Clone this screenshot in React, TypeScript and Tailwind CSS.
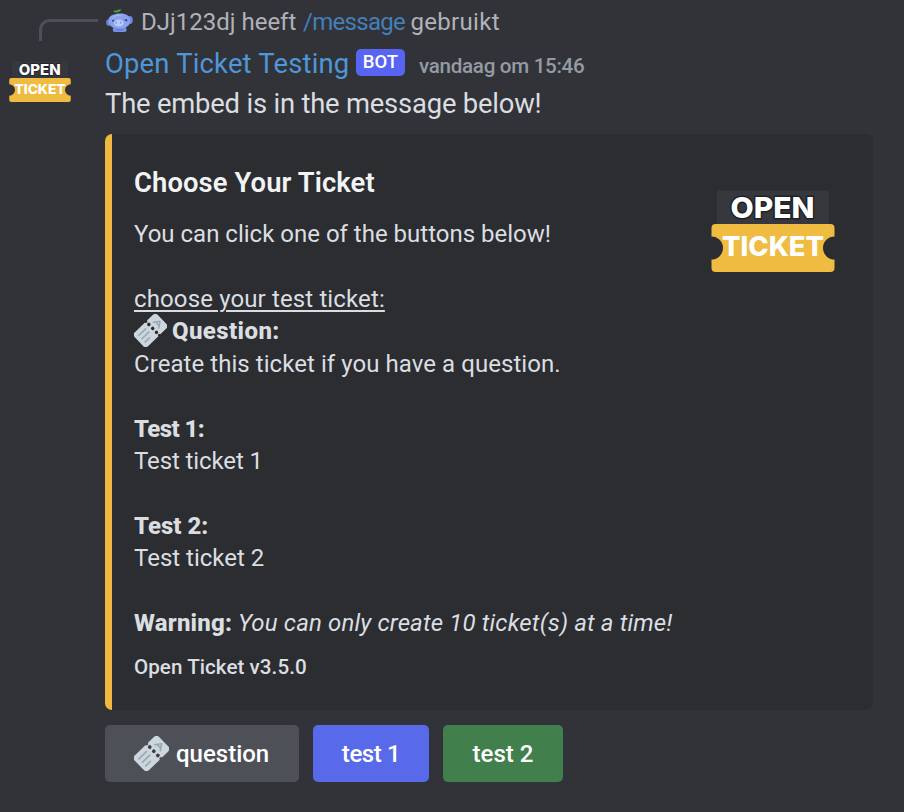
function Logo({ className }: { className: string }) {
  return (
    <svg viewBox="0 0 124 82" className={className}>
      <rect x="6" y="0.5" width="112" height="36" rx="2" fill="#36383e" />
      <path
        d="M4.500 34H119.500Q123.500 34 123.500 38V46.500A11.500 11.500 0 0 0 123.500 69.500V78Q123.500 82 119.500 82H4.500Q.5 82 .5 78V69.500A11.500 11.500 0 0 0 .5 46.500V38Q.5 34 4.500 34Z"
        fill="#efbb40"
      />
      <g fontFamily="Inter, 'Liberation Sans', sans-serif" fontWeight="800" fill="#fff">
        <text x="19.500" y="27.600" fontSize="29" textLength="84" lengthAdjust="spacingAndGlyphs" stroke="#1f2126" strokeWidth="3" paintOrder="stroke">
          OPEN
        </text>
        <text x="11" y="65.800" fontSize="27" textLength="102" lengthAdjust="spacingAndGlyphs">
          TICKET
        </text>
      </g>
    </svg>
  );
}

function TicketEmoji({ className, hole }: { className: string; hole: string }) {
  return (
    <svg viewBox="0 0 36 36" className={className}>
      <g transform="rotate(-44 18 18)">
        <path
          d="M4.500 7.500H19.800A1.500 1.500 0 0 0 22.800 7.500H31.500A4 4 0 0 1 35.500 11.500V24.500A4 4 0 0 1 31.500 28.500H22.800A1.500 1.500 0 0 0 19.800 28.500H4.500A4 4 0 0 1 .5 24.500V11.500A4 4 0 0 1 4.500 7.500Z"
          fill="#ccd6dd"
        />
        <g fill={hole}>
          <circle cx="21.300" cy="12" r="1.900" />
          <circle cx="21.300" cy="18" r="1.900" />
          <circle cx="21.300" cy="24" r="1.900" />
        </g>
        <path d="M5 13H15.500M5 18H15.500M5 23H11.500" stroke="#9aaab4" strokeWidth="1.800" strokeLinecap="round" />
        <path d="M26.500 22.300L32.500 18L26.500 13.700M28.500 15.500V20.500" fill="none" stroke="#9aaab4" strokeWidth="1.700" strokeLinecap="round" strokeLinejoin="round" />
      </g>
    </svg>
  );
}

function UserAvatar() {
  return (
    <svg viewBox="0 0 27 24" className="-mt-[2px] h-[24px] w-[27px] shrink-0">
      <path d="M7 2.800C8.500 .8 10 .8 10.500 1.800C12 .1 13.800 .3 15.300 .6C14 3.400 11.500 4 7 2.800Z" fill="#58a52c" />
      <ellipse cx="2.700" cy="13.500" rx="2.500" ry="3.300" fill="#6d82d6" />
      <ellipse cx="23.900" cy="11" rx="2.900" ry="4" fill="#7087dc" />
      <path d="M8 17H19.500L20.500 20.500Q21 23 18 23H9Q6.500 23 6.800 20.500Z" fill="#7790e4" />
      <path d="M2.500 11C3 6.500 8 4.700 14 4.600C20 4.500 24 7 24.300 11.500C24.500 17 19.500 19.500 13.500 19.600C7 19.700 2 17 2.500 11Z" fill="#88a2f0" />
      <path d="M6 9Q10 5.500 15.500 6.200" stroke="#a3b6f6" strokeWidth="1.300" fill="none" />
      <ellipse cx="12.800" cy="14" rx="5" ry="3.500" fill="#b9caf8" />
      <path d="M10 12.700V15M14.800 12.500V14.800" stroke="#7188d8" strokeWidth="1" />
      <circle cx="7.200" cy="11.800" r="1" fill="#34406f" />
      <path d="M18.500 11.500L20.200 10.500L21 12.300" stroke="#34406f" strokeWidth="1.200" fill="none" />
      <path d="M10 20.800H17" stroke="#5e72c8" strokeWidth="1" />
    </svg>
  );
}

export default function App() {
  return (
    <div className="flex h-[812px] w-[904px] overflow-hidden bg-[#313338] font-[Roboto,'Noto_Sans',sans-serif] whitespace-nowrap text-[#dbdee1]">
      <div className="w-[105px] shrink-0">
        <div className="mt-[19px] ml-[39px] h-[22px] w-[59px] rounded-tl-[11px] border-t-[3px] border-l-[3px] border-[#4e5058]" />
        <Logo className="mt-[20px] ml-[9px] h-[41px] w-[62px]" />
      </div>

      <main className="w-[768px] shrink-0">
        <div className="flex h-[43px] items-center pt-px pl-px text-[24px] leading-[42px] text-[#b0b2b8]">
          <UserAvatar />
          <span className="ml-[8px] w-[162px]">DJj123dj heeft</span>
          <span className="w-[107.500px] tracking-[-0.7px] text-[#447fb8]">/message</span>
          <span className="tracking-[0.3px]">gebruikt</span>
        </div>

        <div className="flex h-[41px] items-baseline pt-px leading-[40px]">
          <span className="w-[251px] text-[27.4px] font-[450] tracking-[0.2px] text-[#4e97d8]">Open Ticket Testing</span>
          <span className="mt-[5px] h-[27px] w-[49px] self-start rounded-[5px] bg-[#5865f2] text-center text-[18.500px] leading-[27px] font-medium text-white">
            BOT
          </span>
          <span className="ml-[14px] text-[20.600px] font-medium tracking-[-0.3px] text-[#949ba4]">vandaag om 15:46</span>
        </div>

        <p className="h-[40px] text-[27.4px] leading-[40px] tracking-[-0.2px]">The embed is in the message below!</p>

        <section className="mt-[10px] flex h-[576px] justify-between rounded-[7px] border-l-[7px] border-[#efb942] bg-[#2b2d31] pt-[31px] pr-[38px] pl-[22px]">
          <div>
            <h1 className="text-[27.4px] leading-[37px] font-semibold tracking-[0.1px] text-[#f2f3f5]">Choose Your Ticket</h1>
            <div className="mt-[16.200px] text-[24px] leading-[32.4px]">
              <p>You can click one of the buttons below!</p>
              <p className="mt-[32.4px] tracking-[0.13px]">
                <span className="underline decoration-2 underline-offset-[3px]">choose your test ticket:</span>
              </p>
              <div className="flex h-[32.4px]">
                <TicketEmoji className="-mt-px h-[33px] w-[33px] shrink-0" hole="#2b2d31" />
                <strong className="ml-[5px] font-extrabold tracking-[0.4px]">Question:</strong>
              </div>
              <p className="tracking-[0.06px]">Create this ticket if you have a question.</p>
              <p className="mt-[32.4px] font-extrabold tracking-[-0.6px]">Test 1:</p>
              <p className="tracking-[-0.1px]">Test ticket 1</p>
              <p className="mt-[32.4px] font-extrabold">Test 2:</p>
              <p>Test ticket 2</p>
              <p className="mt-[32.4px] flex">
                <strong className="w-[104px] font-extrabold tracking-[0.2px]">Warning:</strong>
                <em className="tracking-[0.15px]">You can only create 10 ticket(s) at a time!</em>
              </p>
            </div>
            <p className="mt-[13.400px] text-[20.600px] leading-[28px] font-medium tracking-[0.05px]">Open Ticket v3.5.0</p>
          </div>
          <Logo className="mt-[25px] h-[82px] w-[124px] shrink-0" />
        </section>

        <div className="mt-[15px] flex gap-[14px] text-[24px] leading-[57px] font-medium text-white">
          <button className="flex h-[57px] w-[194px] items-center rounded-[5px] bg-[#4e5058] pl-[29px]">
            <TicketEmoji className="mr-[7px] h-[35px] w-[35px] shrink-0" hole="#3a3c42" />
            <span className="pt-px">question</span>
          </button>
          <button className="h-[57px] w-[116px] rounded-[5px] bg-[#5869ea] pt-px tracking-[-0.4px]">test 1</button>
          <button className="h-[57px] w-[120px] rounded-[5px] bg-[#417f4c] pt-px">test 2</button>
        </div>
      </main>
    </div>
  );
}
